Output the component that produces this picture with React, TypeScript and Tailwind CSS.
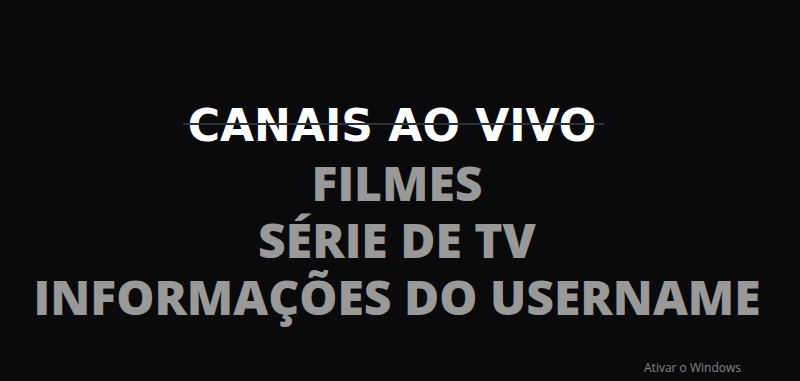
import React from "react";

export default function App() {
  return (
    <div className="relative w-[800px] h-[381px] bg-[#0a0a0d] overflow-hidden flex flex-col items-center pt-[97px] pr-[6px]">
      <div className="relative h-[57px] flex items-center mr-[7px]">
        <span className="text-white text-[44px] leading-[57px] font-bold font-['DejaVu_Sans',sans-serif] pl-[5px] pr-[8px]">
          CANAIS AO VIVO
        </span>
        <span className="absolute left-0 right-0 top-[26px] h-[2px] bg-[#2c313a]" />
      </div>
      <div className="flex flex-col items-center text-[#999999] font-extrabold text-[48px] leading-[57px] font-['Open_Sans',sans-serif]">
        <span>FILMES</span>
        <span>SÉRIE DE TV</span>
        <span>INFORMAÇÕES DO USERNAME</span>
      </div>
      <div className="absolute right-[59px] top-[362px] leading-none text-[#858588] text-[12px] font-['Open_Sans',sans-serif]">
        Ativar o Windows
      </div>
    </div>
  );
}
